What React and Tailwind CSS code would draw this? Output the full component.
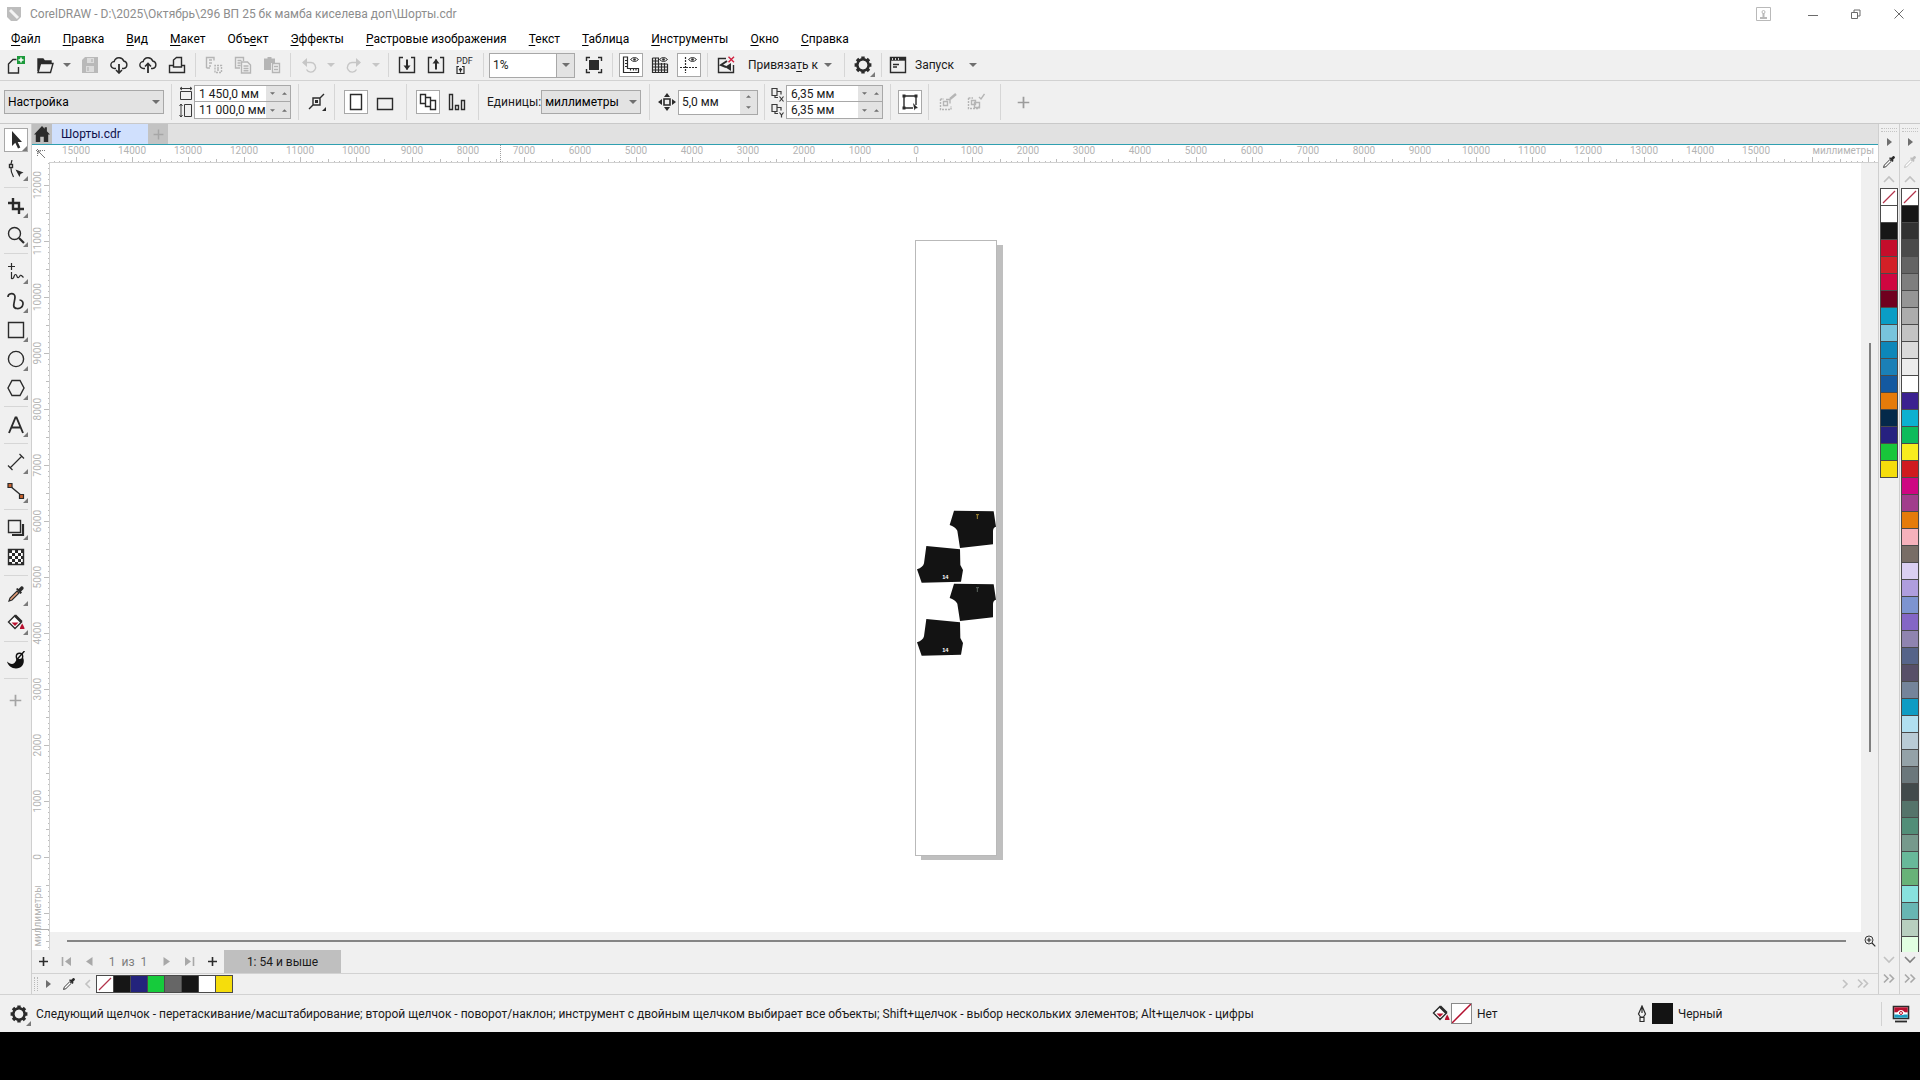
import React from "react";

/* ---------- drawing primitives ---------- */
const Icon = ({ children, className = "text-[#2b2b2b]", size = 18 }) => (
  <svg
    width={size}
    height={size}
    viewBox="0 0 18 18"
    fill="none"
    stroke="currentColor"
    strokeWidth="1.4"
    className={`shrink-0 ${className}`}
    aria-hidden="true"
  >
    {children}
  </svg>
);
const Solid = (p) => <path fill="currentColor" stroke="none" {...p} />;

const Caret = ({ up, className = "text-[#6f6f6f]", small }) => (
  <svg width={small ? 5 : 8} height={small ? 3 : 4} viewBox="0 0 8 4" className={`shrink-0 ${className}`} aria-hidden="true">
    <path d={up ? "M0 4L4 0L8 4Z" : "M0 0L4 4L8 0Z"} fill="currentColor" />
  </svg>
);

const Flyout = () => (
  <svg width="5" height="5" viewBox="0 0 5 5" className="absolute bottom-0 right-0" aria-hidden="true">
    <path d="M5 0v5H0z" fill="#7a7a7a" />
  </svg>
);

const Gear = () => (
  <Icon>
    <circle cx="9" cy="9" r="5.6" strokeWidth="2.6" />
    <path
      strokeWidth="3.4"
      d="M9 3.500V.6M9 14.500v2.900M3.500 9H.6M14.500 9h2.900M5.200 5.200L3 3M12.800 12.800L15 15M5.200 12.800L3 15M12.800 5.200L15 3"
    />
    <circle cx="9" cy="9" r="4.200" fill="#f0f0f0" stroke="none" />
  </Icon>
);
const Dropper = ({ className, tip = "#fff" }) => (
  <Icon className={className}>
    <path d="M2 16l1-3 7-7 2 2-7 7z" fill={tip} strokeWidth="1.2" />
    <Solid d="M9 4l1.500-1 1 1L14 1.500c1.500-.8 3.200.8 2.500 2.500L14 6.500l1 1L13.500 9z" />
  </Icon>
);
const Bucket = () => (
  <Icon>
    <path d="M8 1.500l6.500 6.500L8 14.500 1.500 8z" fill="#fff" />
    <path d="M8 1.500l6.500 6.500" strokeWidth="2.800" />
    <path d="M4.500 8.500h7L8 12z" fill="#b8112f" stroke="none" />
    <path d="M15.200 9.500c1.500 2.500 2.300 4 2.300 5.500h-4.600c0-1.500.8-3 2.300-5.500z" fill="#b8112f" stroke="none" />
  </Icon>
);
const Eye = () => (
  <>
    <path d="M8.500 3.500q4-4 8 0q-4 4-8 0z" strokeWidth="1" />
    <circle cx="12.500" cy="3.500" r="1.300" fill="currentColor" stroke="none" />
  </>
);

/* ---------- standard toolbar icons ---------- */
const NewDoc = () => (
  <Icon>
    <path d="M9.500 3.500H6L1.500 8v9h10v-6" />
    <rect x="10" y="0" width="8" height="8" fill="#1d9b3c" stroke="none" />
    <path d="M14 1.500v5M11.500 4h5" stroke="#fff" strokeWidth="1.500" />
  </Icon>
);
const Open = () => (
  <Icon>
    <path d="M2 15V3h5l1.500 2H15v2" fill="currentColor" />
    <path d="M4.500 7.500H17L14.500 16.500H2z" fill="#f0f0f0" />
  </Icon>
);
const Save = () => (
  <Icon className="text-[#b9b9b9]">
    <Solid d="M1 4l3-3h13v16H1z" />
    <path d="M6 2h7v5H6zM5 10h8v6H5z" fill="#dcdcdc" stroke="none" />
    <path d="M11 3v3M7 11v4" />
  </Icon>
);
const Cloud = ({ up }) => (
  <Icon>
    <path d="M6 12.500H4.500a3.500 3.500 0 0 1-.3-7A5 5 0 0 1 13.700 5a3.800 3.800 0 0 1 0 7.500H12" />
    <path d="M9 8v9" strokeWidth="1.800" />
    <path d={up ? "M6 10.500L9 7.500l3 3" : "M6 14l3 3 3-3"} strokeWidth="1.600" />
  </Icon>
);
const Print = () => (
  <Icon>
    <path d="M5.500 11V4l3-2.500h5V11zM5.500 9.500h-4v7h15v-7h-3" />
  </Icon>
);
const Cut = () => (
  <Icon className="text-[#b5b5b5]">
    <path d="M1.500 12V1.500H9v3M1.500 12H5M4 4h3M4 7h3M4 10h2" />
    <path d="M10 16.500v-7h6.500v7zM12 12h3M12 14h3" strokeDasharray="2 1" />
  </Icon>
);
const Copy = () => (
  <Icon className="text-[#b5b5b5]">
    <path d="M6 12H1.500V1.500h8V5M3.500 4.500h4M3.500 7h3M3.500 9.500h3M7.500 6h6l3 3v8h-9zM9.500 10h5M9.500 12.500h5M9.500 14.800h5" />
  </Icon>
);
const Paste = () => (
  <Icon className="text-[#b5b5b5]">
    <Solid d="M1 2.500h3.500V1h4v1.500H12V7H8v7H1z" />
    <path d="M9.500 7.500h7v9h-7zM11 10.500h4M11 13.500h4" />
  </Icon>
);
const Undo = ({ flip }) => (
  <Icon className={`text-[#c6c6c6] ${flip ? "-scale-x-100" : ""}`}>
    <path d="M3 6.500h8a4.800 4.800 0 1 1-4.500 7" />
    <Solid d="M7 2v9L2 6.500z" />
  </Icon>
);
const Port = ({ up }) => (
  <Icon>
    <path d="M5 1.500H1.500v15h15v-15H13" />
    <path d="M9 3.500v10" strokeWidth="2" />
    <Solid d={up ? "M5.500 7.500h7L9 3z" : "M5.500 9.500h7L9 14z"} />
  </Icon>
);
const Pdf = () => (
  <span className="flex flex-col text-[#2b2b2b]">
    <span className="text-[9px] leading-[9px]">PDF</span>
    <svg width="9" height="8" viewBox="0 0 9 8" fill="none" stroke="currentColor" aria-hidden="true">
      <path d="M3 .5H1v7h7v-7H6M4.500 6.500v-4M3 4l1.500-1.500L6 4" strokeWidth="1.200" />
    </svg>
  </span>
);
const Full = () => (
  <Icon>
    <Solid d="M4 4h10v10H4z" />
    <path d="M1.500 5V1.500H5M13 1.500h3.500V5M16.500 13v3.500H13M5 16.500H1.500V13" />
  </Icon>
);
const RulerIc = () => (
  <Icon>
    <path d="M1.500 1v15.500h15v-4h-11V1zM3 4.500h2.500M3 7.500h2.500M3 10.500h2.500M8.500 13v1.500M11.500 13v1.500M14 13v1.500" strokeWidth="1.200" />
    <Eye />
  </Icon>
);
const GridIc = () => (
  <Icon>
    <path d="M1.500 2v14.500h15V8M1.500 2H8M4.500 2v14.500M7.500 2v14.500M10.500 7v9.500M13.500 7v9.500M1.500 5H7.500M1.500 8h15M1.500 11h15M1.500 14h15" strokeWidth="1.200" />
    <Eye />
  </Icon>
);
const GuideIc = () => (
  <Icon>
    <path d="M5.500 1v16M0 11.500h18" strokeDasharray="2 1" strokeWidth="1.200" />
    <Eye />
  </Icon>
);
const SnapOff = () => (
  <Icon>
    <path d="M9 2.500H1.500v14h15V9" />
    <path d="M10 5l-6 4 5 2" strokeWidth="2" />
    <Solid d="M14 7v8l-6-4z" />
    <path d="M11.500.8l5.500 5.500M17 .8l-5.500 5.500" stroke="#d0213f" />
  </Icon>
);
const Launch = () => (
  <Icon>
    <path d="M1.500 1.500h15v15h-15zM4 8.500h6M4 11h4" />
    <path d="M1.500 3.200h15" strokeWidth="3" />
    <path d="M3 3h1M6 3h1M9 3h1" stroke="#fff" />
  </Icon>
);

/* ---------- toolbox icons ---------- */
const TOOLS = [
  [
    ["Указатель", <Icon><Solid d="M5 0v15l3.300-3.200L11 17.500l2.300-1.100-2.600-5.400H15z" /></Icon>, true],
    ["Форма", <Icon><path d="M5 0Q2 9 6.500 17" strokeWidth="1.200" /><rect x="2.500" y="4.500" width="3" height="3" fill="#fff" /><Solid d="M8.500 9.500l8 3-3 1.500-1 3z" /></Icon>],
  ],
  [
    ["Обрезка", <Icon><path d="M6 1v11h11M1 6h11v11" strokeWidth="2.400" /></Icon>],
    ["Масштаб", <Icon><circle cx="7.500" cy="7.500" r="6" /><path d="M12 12l5 5" strokeWidth="2.200" /></Icon>],
  ],
  [
    ["Свободная форма", <Icon><path d="M4.500 0v7M1 3.500h7M4.500 9v6.500c3 1 2-4 4-4s1 4 3 3 1-3 3-2l2 2" strokeWidth="1.200" /></Icon>],
    ["Художественное оформление", <Icon><path d="M1 5c0-4 7-5 7 0S4 16 10 16.500C17 17 18 8 12.500 8" strokeWidth="1.700" /></Icon>],
    ["Прямоугольник", <Icon><path d="M1.500 1.500h15v15h-15z" /></Icon>],
    ["Эллипс", <Icon><circle cx="9" cy="9" r="7.600" /></Icon>],
    ["Многоугольник", <Icon><path d="M5 1.500h8L17 9l-4 7.500H5L1 9z" /></Icon>],
  ],
  [["Текст", <Icon><path d="M2 17L8.500 1.500h1L16 17M4.500 11.500h9" strokeWidth="1.900" /></Icon>]],
  [
    ["Размер", <Icon><path d="M3 15L15 3M1 12.500l4.500 4.500M12.500 1L17 5.500" strokeWidth="1.200" /></Icon>],
    ["Соединитель", <Icon><path d="M3 4l12 10" /><path d="M1 1.500h4v4H1zM12.500 12.500h4v4h-4z" fill="#c8612c" strokeWidth="1.200" /></Icon>],
  ],
  [
    ["Тень", <Icon><path d="M1.500 1.500h12v12h-12z" /><path d="M5 16h11V5" strokeWidth="2.200" /></Icon>],
    [
      "Прозрачность",
      <Icon>
        <path d="M1.500 1.500h15v15h-15z" fill="#fff" />
        <Solid d="M2 2h3v3H2zM8 2h3v3H8zM14 2h3v3h-3zM5 5h3v3H5zM11 5h3v3h-3zM2 8h3v3H2zM8 8h3v3H8zM14 8h3v3h-3zM5 11h3v3H5zM11 11h3v3h-3zM2 14h3v3H2zM8 14h3v3H8zM14 14h3v3h-3z" />
      </Icon>,
      false,
      true,
    ],
  ],
  [
    ["Пипетка", <Dropper tip="#e9a27c" />],
    ["Интерактивная заливка", <Bucket />],
  ],
  [
    [
      "Художник",
      <Icon className="text-[#111111]">
        <Solid d="M0 10.500c3 3 7 3.500 8.500 0C10 7 14 6.500 16.500 7.500c1.500 6-2.500 10-7.500 10-4.500 0-8-3-9-7z" />
        <circle cx="12.500" cy="5.500" r="3.200" fill="#f0f0f0" />
        <path d="M17.500 0l-8 9" />
      </Icon>,
      false,
      true,
    ],
  ],
];

const DOC_COLORS = [
  "#ffffff", "#161616", "#c40d2b", "#d32027", "#cf0640", "#70001f", "#0a9dc5", "#78c4dc",
  "#0d87b9", "#1b80b7", "#1459a0", "#e57b0a", "#04294a", "#262180", "#18c63a", "#f5dd0c",
];
const MAIN_COLORS = [
  "#161616", "#323232", "#4a4a4a", "#646464", "#7e7e7e", "#959595", "#acacac", "#c3c3c3", "#dadada", "#ececec",
  "#ffffff", "#3b2190", "#0cb0d0", "#0dbb5b", "#f8ec1e", "#cf1a1f", "#ce0682", "#a13d8c", "#e57b0a", "#f5b1bb",
  "#786d66", "#dacff2", "#af9ede", "#7d94d0", "#8466c6", "#8f84b0", "#566489", "#574f68", "#74849a", "#0d9cc4",
  "#b0dff0", "#b9cbd5", "#94a2a8", "#6b777b", "#424a4b", "#55736a", "#528e78", "#76998c", "#68b99a", "#68b278",
  "#88e2de", "#68b6b3", "#b8cfbf", "#e2ffe2",
];
const BOTTOM_COLORS = ["#161616", "#23237c", "#16cb3c", "#666666", "#161616", "#ffffff", "#f5dd0c"];

/* ---------- small building blocks ---------- */
const Cell = ({ label, on, fly, children }) => (
  <div className="flex w-[29px] shrink-0 justify-center">
    <button
      aria-label={label}
      className={`relative flex size-6 items-center justify-center ${on ? "border border-[#a8a8a8] bg-white" : ""}`}
    >
      {children}
      {fly && <Flyout />}
    </button>
  </div>
);
const Drop = ({ label, faint }) => (
  <button aria-label={label} className="flex h-6 w-4 shrink-0 items-center justify-center">
    <Caret className={faint ? "text-[#c6c6c6]" : "text-[#6f6f6f]"} />
  </button>
);
const Sep = () => (
  <div className="flex w-2 shrink-0 justify-center">
    <div className="h-6 w-px bg-[#d6d6d6]" />
  </div>
);
const TallSep = () => <div className="h-9 w-px shrink-0 bg-[#d6d6d6]" />;

const PairField = ({ id, label, value }) => (
  <div className="flex h-4 bg-white">
    <label htmlFor={id} className="sr-only">{label}</label>
    <input id={id} defaultValue={value} className="min-w-0 flex-1 bg-white pl-1 text-xs leading-4 outline-none" />
    <div className="flex w-6 shrink-0 items-center justify-around bg-[#e3e3e3]">
      <button aria-label={`${label}: меньше`}><Caret small /></button>
      <button aria-label={`${label}: больше`}><Caret small up /></button>
    </div>
  </div>
);

const NoColor = () => (
  <svg viewBox="0 0 16 16" className="size-full bg-white" aria-hidden="true">
    <path d="M2 14L14 2" stroke="#b3344c" strokeWidth="1.200" />
  </svg>
);

const Chevron = ({ d, className = "text-[#c2c2c2]" }) => (
  <svg width="14" height="12" viewBox="0 0 14 12" fill="none" stroke="currentColor" strokeWidth="1.600" className={className} aria-hidden="true">
    <path d={d} />
  </svg>
);
const DBL = "M2 1.500l4 4-4 4M7.500 1.500l4 4-4 4";

const Palette = ({ name, colors, faint, full }) => (
  <section aria-label={name} className="flex w-[21px] shrink-0 flex-col items-center overflow-hidden border-l border-[#cfcfcf]">
    <div className="mt-1 h-1 w-4 shrink-0 border-y border-dotted border-[#c4c4c4]" />
    <button aria-label="Меню палитры" className="flex h-5 shrink-0 items-center">
      <svg width="5" height="8" viewBox="0 0 5 8"><path d="M0 0L5 4L0 8Z" fill="#6f6f6f" /></svg>
    </button>
    <button aria-label="Пипетка" className="flex h-5 shrink-0 items-center">
      <Dropper className={`size-[14px] ${faint ? "text-[#bdbdbd]" : "text-[#2b2b2b]"}`} />
    </button>
    <button aria-label="Вверх" className="flex h-4 shrink-0 items-center">
      <Chevron d="M2 8l5-5 5 5" />
    </button>
    <div className="flex min-h-0 w-[18px] flex-1 flex-col overflow-hidden">
      <button aria-label="Нет цвета" className="h-[18px] w-full shrink-0 border border-[#4a4a4a] bg-white"><NoColor /></button>
      {colors.map((c, i) => (
        <button key={i} aria-label={c} className="h-[17px] w-full shrink-0 border border-t-0 border-[#4a4a4a]" style={{ backgroundColor: c }} />
      ))}
    </div>
    <button aria-label="Вниз" className="flex h-4 shrink-0 items-center">
      <Chevron d="M2 3l5 5 5-5" className={full ? "text-[#808080]" : "text-[#c2c2c2]"} />
    </button>
    <button aria-label="Развернуть" className="flex h-[26px] shrink-0 items-start pt-[5px]">
      <Chevron d={DBL} className="text-[#a8a8a8]" />
    </button>
  </section>
);

/* ---------- rulers ---------- */
const H_MARKS = Array.from({ length: 33 }, (_, i) => i - 15);
const V_MARKS = Array.from({ length: 15 }, (_, i) => 12 - i);

const HRuler = () => (
  <div className="relative min-w-0 flex-1 overflow-hidden border-b border-[#d0d0d0] bg-white">
    <div className="-ml-px flex h-[17px]">
      {H_MARKS.map((m) => (
        <div key={m} className="flex h-full w-14 shrink-0 flex-col items-center justify-between">
          <span className="text-[10px] leading-3 text-[#b4b4b4]">{m < 16 ? Math.abs(m) * 1000 : ""}</span>
          <svg width="56" height="5" viewBox="0 0 56 5" className="shrink-0" aria-hidden="true">
            <path d="M28.500 0v5M.5 2v3" stroke="#bdbdbd" />
            <path d="M6 4.500h1M11 4.500h1M17 4.500h1M22 4.500h1M34 4.500h1M39 4.500h1M45 4.500h1M50 4.500h1" stroke="#bdbdbd" />
          </svg>
        </div>
      ))}
    </div>
    <span className="absolute right-1 top-0 bg-white text-[10px] leading-3 text-[#b4b4b4]">миллиметры</span>
    <div className="absolute left-[451px] top-0 h-full border-l border-dotted border-[#a0a0a0]" />
  </div>
);

const VRuler = () => (
  <div className="relative w-[18px] shrink-0 overflow-hidden border-r border-[#d0d0d0] bg-white">
    <div className="-mt-1.5 flex flex-col">
      {V_MARKS.map((m) => (
        <div key={m} className="flex h-14 w-full shrink-0 items-center justify-between">
          <span className="rotate-180 text-[10px] leading-3 text-[#b4b4b4] [writing-mode:vertical-rl]">{m >= 0 ? m * 1000 : ""}</span>
          <svg width="5" height="56" viewBox="0 0 5 56" className="shrink-0" aria-hidden="true">
            <path d="M0 28.500h5M2 .5h3" stroke="#bdbdbd" />
            <path d="M4.500 6v1M4.500 11v1M4.500 17v1M4.500 22v1M4.500 34v1M4.500 39v1M4.500 45v1M4.500 50v1" stroke="#bdbdbd" />
          </svg>
        </div>
      ))}
    </div>
    <span className="absolute bottom-1 left-0 rotate-180 text-[10px] leading-3 text-[#b4b4b4] [writing-mode:vertical-rl]">миллиметры</span>
    <div className="absolute bottom-5 left-0 w-full border-t border-[#b0b0b0]" />
  </div>
);

/* ---------- artwork on the page ---------- */
const Pieces = ({ dy, mark }) => (
  <g transform={`translate(0 ${dy})`}>
    <path d="M162 62L281 64L288 110Q280 112 279 122V163L180 174L172 122Q165 110 149 105Z" fill="#131313" />
    <path d="M79 168L180 178L181 225L189 240L183 275L65 278L51 238Q69 232 72 220Z" fill="#131313" />
    <path d="M228 74h9M232 74v13" stroke={mark} strokeWidth="3" />
    <text x="136" y="267" fontSize="17" fontWeight="700" textAnchor="middle" fill="#fff" fontFamily="Liberation Sans, sans-serif">14</text>
  </g>
);

const MENU = [
  ["", "Ф", "айл"], ["", "П", "равка"], ["", "В", "ид"], ["", "М", "акет"], ["Объ", "е", "кт"], ["", "Э", "ффекты"],
  ["", "Р", "астровые изображения"], ["", "Т", "екст"], ["", "Т", "аблица"], ["", "И", "нструменты"], ["", "О", "кно"], ["", "С", "правка"],
];

export default function App() {
  return (
    <div className="flex h-screen flex-col overflow-hidden bg-[#f0f0f0] font-['Roboto','Open_Sans',sans-serif] text-xs text-[#1a1a1a]">
      {/* title bar */}
      <header className="flex h-7 shrink-0 items-center bg-white pl-1.5">
        <svg width="16" height="16" viewBox="0 0 16 16" aria-hidden="true">
          <path d="M1 1h14v10l-4 4H5l-4-4z" fill="#bdbdbd" />
          <path d="M4 4l8 8" stroke="#f4f4f4" strokeWidth="3" />
        </svg>
        <h1 className="ml-2 flex-1 text-[#8d8d8d]">CorelDRAW - D:\2025\Октябрь\296 ВП 25 бк мамба киселева доп\Шорты.cdr</h1>
        <button aria-label="Учетная запись" className="mr-4 flex w-6 justify-center">
          <svg width="15" height="14" viewBox="0 0 15 14" fill="none" stroke="#b9b9b9" aria-hidden="true">
            <path d="M.5.500h14v13H.5z" /><path d="M4 11h7M7.500 10V6" strokeWidth="2" /><circle cx="7.500" cy="5" r="1.500" />
          </svg>
        </button>
        {[
          ["Свернуть", "M0 6.500h10"],
          ["Восстановить", "M.5 3.500h6v6h-6zM3 3.500V1h6v6H6.500"],
          ["Закрыть", "M.5.500l9 9M9.500.500l-9 9"],
        ].map(([l, d]) => (
          <button key={l} aria-label={l} className="flex h-full w-[43px] items-center justify-center">
            <svg width="10" height="10" viewBox="0 0 10 10" fill="none" stroke="#6b6b6b" aria-hidden="true"><path d={d} /></svg>
          </button>
        ))}
      </header>

      {/* menu */}
      <nav className="flex h-[22px] shrink-0 items-center bg-white">
        {MENU.map(([a, u, b]) => (
          <button key={u + b} className="whitespace-nowrap px-[11px] text-black">
            {a}<span className="underline underline-offset-2">{u}</span>{b}
          </button>
        ))}
      </nav>

      {/* standard toolbar */}
      <div className="flex h-[31px] shrink-0 items-center border-b border-[#d2d2d2] pl-px">
        <Cell label="Создать"><NewDoc /></Cell>
        <Cell label="Открыть"><Open /></Cell>
        <Drop label="Недавние файлы" />
        <Cell label="Сохранить"><Save /></Cell>
        <Cell label="Загрузить из облака"><Cloud /></Cell>
        <Cell label="Отправить в облако"><Cloud up /></Cell>
        <Cell label="Печать"><Print /></Cell>
        <Sep />
        <Cell label="Вырезать"><Cut /></Cell>
        <Cell label="Копировать"><Copy /></Cell>
        <Cell label="Вставить"><Paste /></Cell>
        <Sep />
        <Cell label="Отменить"><Undo /></Cell>
        <Drop label="Список отмены" faint />
        <Cell label="Повторить"><Undo flip /></Cell>
        <Drop label="Список повтора" faint />
        <Sep />
        <Cell label="Импорт"><Port /></Cell>
        <Cell label="Экспорт"><Port up /></Cell>
        <Cell label="Публикация в PDF"><Pdf /></Cell>
        <Sep />
        <div className="ml-0.5 mr-1 flex h-[25px] w-[86px] shrink-0 border border-[#a8a8a8] bg-white">
          <input aria-label="Масштаб" defaultValue="1%" className="min-w-0 flex-1 px-[3px] text-xs outline-none" />
          <button aria-label="Выбрать масштаб" className="flex w-[18px] items-center justify-center border-l border-[#a8a8a8] bg-[#e3e3e3]"><Caret /></button>
        </div>
        <Cell label="Полноэкранный просмотр"><Full /></Cell>
        <Sep />
        <Cell label="Линейки" on><RulerIc /></Cell>
        <Cell label="Сетка"><GridIc /></Cell>
        <Cell label="Направляющие" on><GuideIc /></Cell>
        <Sep />
        <Cell label="Отключить привязку"><SnapOff /></Cell>
        <button className="mr-1 flex h-6 w-24 shrink-0 items-center justify-between pl-2 pr-1">
          <span className="whitespace-nowrap">Привяза<span className="underline underline-offset-2">т</span>ь к</span>
          <Caret />
        </button>
        <Sep />
        <Cell label="Параметры" fly><Gear /></Cell>
        <Sep />
        <button className="flex h-6 w-24 shrink-0 items-center gap-2 pl-1 pr-1">
          <Launch />
          <span className="flex-1 text-left">Запуск</span>
          <Caret />
        </button>
      </div>

      {/* property bar */}
      <div className="flex h-[43px] shrink-0 items-center border-b border-[#c9c9c9] pl-1">
        <div className="relative mr-[7px] w-40 shrink-0">
          <select aria-label="Размер страницы" className="h-6 w-full appearance-none border border-[#a8a8a8] bg-[#e3e3e3] px-[3px] text-xs text-black">
            <option>Настройка</option>
          </select>
          <span className="pointer-events-none absolute right-1 top-2.5"><Caret /></span>
        </div>
        <TallSep />
        <div className="ml-[7px] mr-px flex shrink-0 flex-col gap-0.5 text-[#3a3a3a]">
          <svg width="14" height="15" viewBox="0 0 14 15" fill="none" stroke="currentColor"><path d="M1.500 5.500h11v8h-11zM1 2.500h12M3 1L1 2.500 3 4M11 1l2 1.500L11 4" /></svg>
          <svg width="14" height="15" viewBox="0 0 14 15" fill="none" stroke="currentColor"><path d="M5.500 1.500h7v12h-7zM2 1v13M.5 3L2 1l1.500 2M.5 12L2 14l1.500-2" /></svg>
        </div>
        <div className="mr-[7px] w-[97px] shrink-0 divide-y divide-[#a8a8a8] border border-[#a8a8a8]">
          <PairField id="pw" label="Ширина" value="1 450,0 мм" />
          <PairField id="ph" label="Высота" value="11 000,0 мм" />
        </div>
        <TallSep />
        <div className="flex w-[35px] shrink-0 justify-center">
          <button aria-label="Точность перетаскивания">
            <Icon>
              <path d="M5 5h7v7H5zM1 16l4-4M12 5l4-4" /><Solid d="M7 7h3v3H7zM18 18v-4l-4 4z" />
            </Icon>
          </button>
        </div>
        <TallSep />
        <div className="flex w-[71px] shrink-0 gap-2 pl-[9px]">
          <button aria-label="Книжная" className="flex size-6 items-center justify-center border border-[#a8a8a8] bg-white"><Icon><path d="M3.500 1.500h11v15h-11z" /></Icon></button>
          <button aria-label="Альбомная" className="flex h-6 items-center pt-1"><Icon><path d="M1.500 3.500h15v11h-15z" /></Icon></button>
        </div>
        <TallSep />
        <div className="flex w-[71px] shrink-0 gap-2 pl-[9px]">
          <button aria-label="Все страницы" className="flex size-6 items-center justify-center border border-[#a8a8a8] bg-white">
            <Icon><path d="M1.500 1.500h5v9h-5zM6.500 4.500h5v9h-5zM11.500 7.500h5v9h-5z" fill="#fff" /></Icon>
          </button>
          <button aria-label="Текущая страница" className="flex h-6 items-center">
            <Icon><path d="M1.500 1.500h3v15h-3zM7.500 12.500h3v4h-3zM13.500 7.500h3v9h-3z" /></Icon>
          </button>
        </div>
        <TallSep />
        <div className="flex w-[170px] shrink-0 items-center justify-between px-2">
          <label htmlFor="units">Единицы:</label>
          <div className="relative w-[102px]">
            <select id="units" className="h-6 w-full appearance-none border border-[#a8a8a8] bg-[#e3e3e3] px-[3px] text-xs text-black"><option>миллиметры</option></select>
            <span className="pointer-events-none absolute right-1 top-2.5"><Caret /></span>
          </div>
        </div>
        <TallSep />
        <div className="flex w-[114px] shrink-0 items-center gap-0.5 pl-2">
          <Icon><path d="M6 6h6v6H6z" strokeWidth="1.600" /><Solid d="M9 0l3 4H6zM9 18l3-4H6zM0 9l4-3v6zM18 9l-4-3v6z" /></Icon>
          <div className="flex h-[25px] w-20 border border-[#a8a8a8] bg-white">
            <input aria-label="Шаг смещения" defaultValue="5,0 мм" className="min-w-0 flex-1 px-[3px] text-xs outline-none" />
            <div className="flex w-[17px] flex-col items-center justify-around bg-[#e3e3e3]">
              <button aria-label="Больше"><Caret small up className="block text-[#6f6f6f]" /></button>
              <button aria-label="Меньше"><Caret small className="block text-[#6f6f6f]" /></button>
            </div>
          </div>
        </div>
        <TallSep />
        <div className="ml-1.5 mr-px flex shrink-0 flex-col text-[#3a3a3a]">
          {["M8.500 10.500l4 5M12.500 10.500l-4 5", "M8.500 10.500l2 2.500 2-2.500M10.500 13v2.500"].map((d) => (
            <svg key={d} width="14" height="16" viewBox="0 0 14 16" fill="none" stroke="currentColor" strokeWidth="1.200" aria-hidden="true">
              <path d="M1 2.500h5v7H1zM6 5.500h4v3M4 9.500v2h3" />
              <path d={d} />
            </svg>
          ))}
        </div>
        <div className="mr-[7px] w-[97px] shrink-0 divide-y divide-[#a8a8a8] border border-[#a8a8a8]">
          <PairField id="dx" label="Дублирование X" value="6,35 мм" />
          <PairField id="dy" label="Дублирование Y" value="6,35 мм" />
        </div>
        <TallSep />
        <div className="flex w-[37px] shrink-0 justify-center">
          <button aria-label="Обрабатывать как с заливкой" className="flex size-6 items-center justify-center border border-[#a8a8a8] bg-white">
            <Icon><path d="M3 3h12v9M3 3v12h9" /><Solid d="M1.500 1.500h3v3h-3zM13.500 1.500h3v3h-3zM1.500 13.500h3v3h-3zM12 10l5 5-2.500.5-1 2z" /></Icon>
          </button>
        </div>
        <TallSep />
        <div className="flex w-[71px] shrink-0 items-center gap-2.5 pl-2.5 text-[#b5b5b5]">
          <Icon className=""><path d="M1.500 6v10.500H12V13M1.500 6H5" strokeDasharray="2 1" /><path d="M4.500 8.500h4v4h-4zM7 6.500h4v4" /><path d="M11 6l6-5" strokeWidth="2.400" /></Icon>
          <Icon className=""><path d="M1.500 5v10.500H12V13M1.500 5H6" strokeDasharray="2 1" /><path d="M4.500 7.500h4v4h-4zM7.500 9.500h5v5h-5zM12 4l2 2 3.500-5" /></Icon>
        </div>
        <TallSep />
        <button aria-label="Настроить" className="flex w-11 shrink-0 justify-center"><Icon size={13} className="text-[#9c9c9c]"><path d="M9 1v16M1 9h16" strokeWidth="2.400" /></Icon></button>
      </div>

      {/* working area */}
      <main className="flex min-h-0 flex-1">
        <aside className="flex w-8 shrink-0 flex-col items-center border-r border-[#cfcfcf] pr-1 pt-px">
          {TOOLS.map((group, g) => (
            <React.Fragment key={g}>
              {group.map(([label, icon, on, noFly]) => (
                <div key={label} className="flex h-[29px] shrink-0 items-center pl-1">
                  <button aria-label={label} className={`relative flex size-6 items-center justify-center ${on ? "border border-[#a8a8a8] bg-white" : ""}`}>
                    {icon}
                    {!noFly && <Flyout />}
                  </button>
                </div>
              ))}
              <div className="my-[3px] ml-1 h-0.5 w-6 shrink-0 border-b border-[#d6d6d6]" />
            </React.Fragment>
          ))}
          <button aria-label="Добавить инструменты" className="ml-1 mt-3"><Icon size={13} className="text-[#a4a4a4]"><path d="M9 1v16M1 9h16" strokeWidth="2.400" /></Icon></button>
        </aside>

        <div className="flex min-w-0 flex-1 flex-col">
          {/* document tabs */}
          <div className="flex h-[21px] shrink-0 border-b border-[#2f9fb0] bg-[#e1e1e1]">
            <button aria-label="Начало" className="flex w-5 items-center justify-center bg-[#bfbfbf]">
              <Icon size={16}><Solid d="M9 0L0 9.500h2V18h5v-6h4v6h5V9.500h2L14.500 6V1.500h-2.500V3z" /></Icon>
            </button>
            <button className="w-24 bg-[#d0e0fd] pl-[9px] text-left text-[#10104a]">Шорты.cdr</button>
            <button aria-label="Новая вкладка" className="flex w-5 items-center justify-center bg-[#c3c3c3]">
              <Icon size={11} className="text-[#a6a6a6]"><path d="M9 1v16M1 9h16" strokeWidth="2.400" /></Icon>
            </button>
          </div>

          <div className="flex shrink-0">
            <div className="flex h-[18px] w-[17px] shrink-0 items-center justify-center bg-white">
              <svg width="10" height="10" viewBox="0 0 10 10" fill="none" stroke="#7a7a7a" aria-hidden="true"><path d="M1.500 0v8M0 1.500h9" strokeDasharray="1 1" /><path d="M2 2l7 7M2 5V2h3" /></svg>
            </div>
            <HRuler />
          </div>

          <div className="flex min-h-0 flex-1">
            <VRuler />
            <div className="flex min-w-0 flex-1 flex-col">
              <div className="flex min-h-0 flex-1">
                <div className="relative min-w-0 flex-1 overflow-hidden bg-white">
                  <div className="absolute left-[871px] top-[82px] h-[615px] w-[82px] bg-[#bfbfbf]" />
                  <div className="absolute left-[865px] top-[77px] h-[616px] w-[82px] border border-[#b9b9b9] bg-white" />
                  <svg width="120" height="180" viewBox="0 0 360 540" className="absolute left-[850px] top-[327px]" aria-label="Раскладка">
                    <Pieces dy={0} mark="#a58a35" />
                    <Pieces dy={219} mark="#5d655f" />
                  </svg>
                </div>
                <div className="flex w-[17px] shrink-0 flex-col pt-[180px]">
                  <div className="ml-2 h-[409px] w-0.5 bg-[#7f7f7f]" />
                </div>
              </div>
              <div className="flex h-[18px] shrink-0 items-center pl-[17px]">
                <div className="mr-[18px] h-0.5 flex-1 bg-[#858585]" />
                <button aria-label="Навигатор" className="mr-0.5">
                  <Icon size={12}><circle cx="7.500" cy="7.500" r="6" /><path d="M12 12l5 5M7.500 4v7M4 7.500h7" strokeWidth="1.800" /></Icon>
                </button>
              </div>
            </div>
          </div>

          {/* page navigator */}
          <div className="flex h-6 shrink-0 items-stretch border-b border-[#d2d2d2]">
            {[
              ["Добавить страницу в начало", "M6.500 2v9M2 6.500h9", "#2b2b2b"],
              ["Первая", "M2.500 2v9", "#a8a8a8", "M11 2v9L5 6.500z"],
              ["Предыдущая", "", "#a8a8a8", "M9.500 2v9L3 6.500z"],
            ].map(([l, d, c, f]) => (
              <button key={l} aria-label={l} className="flex w-[23px] items-center justify-center">
                <svg width="13" height="13" viewBox="0 0 13 13" stroke={c} strokeWidth="1.600"><path d={d} />{f && <path d={f} fill={c} stroke="none" />}</svg>
              </button>
            ))}
            <span className="flex w-[54px] items-center justify-center whitespace-pre text-[#7d7d7d]">1  из  1</span>
            {[
              ["Следующая", "", "#a8a8a8", "M3.500 2v9L10 6.500z"],
              ["Последняя", "M10.500 2v9", "#a8a8a8", "M2 2v9l6-4.500z"],
              ["Добавить страницу в конец", "M6.500 2v9M2 6.500h9", "#2b2b2b"],
            ].map(([l, d, c, f]) => (
              <button key={l} aria-label={l} className="flex w-[23px] items-center justify-center">
                <svg width="13" height="13" viewBox="0 0 13 13" stroke={c} strokeWidth="1.600"><path d={d} />{f && <path d={f} fill={c} stroke="none" />}</svg>
              </button>
            ))}
            <button className="w-[117px] bg-[#bfbfbf]">1: 54 и выше</button>
          </div>

          {/* document palette */}
          <div className="flex h-5 shrink-0 items-center pl-0.5">
            <div className="h-3.5 w-1 border-x border-dotted border-[#b9b9b9]" />
            <button aria-label="Меню палитры" className="flex w-5 justify-center"><svg width="5" height="8" viewBox="0 0 5 8"><path d="M0 0L5 4L0 8Z" fill="#6f6f6f" /></svg></button>
            <button aria-label="Пипетка" className="flex w-[22px] justify-center"><Dropper className="size-[14px] text-[#2b2b2b]" /></button>
            <button aria-label="Назад" className="flex w-4 justify-center"><Chevron d="M9 2L5 6l4 4" /></button>
            <div className="flex h-[18px]">
              <button aria-label="Нет цвета" className="w-[18px] border border-[#4a4a4a]"><NoColor /></button>
              {BOTTOM_COLORS.map((c, i) => (
                <button key={i} aria-label={c} className="w-[17px] border border-l-0 border-[#4a4a4a]" style={{ backgroundColor: c }} />
              ))}
            </div>
            <div className="ml-auto mr-2 flex gap-1">
              <button aria-label="Вперед"><Chevron d="M5 2l4 4-4 4" /></button>
              <button aria-label="Развернуть"><Chevron d={DBL} /></button>
            </div>
          </div>
        </div>

        <Palette name="Палитра документа" colors={DOC_COLORS} />
        <Palette name="Палитра по умолчанию" colors={MAIN_COLORS} faint full />
      </main>

      {/* status bar */}
      <footer className="flex h-[38px] shrink-0 items-center border-t border-[#d2d2d2] pl-[7px]">
        <button aria-label="Настройка строки состояния" className="relative flex size-6 items-center justify-center"><Gear /><Flyout /></button>
        <p className="ml-[5px] flex-1 whitespace-nowrap">
          Следующий щелчок - перетаскивание/масштабирование; второй щелчок - поворот/наклон; инструмент с двойным щелчком выбирает все объекты; Shift+щелчок - выбор нескольких элементов; Alt+щелчок - цифры
        </p>
        <div className="flex w-[202px] shrink-0 items-center">
          <Bucket />
          <span className="ml-px mr-[5px] size-[21px] border border-[#8a8a8a]">
            <svg viewBox="0 0 19 19" className="size-full bg-white" aria-hidden="true"><path d="M0 19L19 0" stroke="#b3112f" strokeWidth="1.500" /></svg>
          </span>
          Нет
        </div>
        <div className="flex w-[247px] shrink-0 items-center">
          <Icon><path d="M8 1L4.500 9l2 3h3l2-3zM8 1v7M6 12.500h4v4H6z" strokeWidth="1.200" /></Icon>
          <span className="mr-[5px] size-[21px] bg-[#131313]" />
          Черный
        </div>
        <div className="flex h-6 w-[39px] shrink-0 items-center border-l border-[#d2d2d2] pl-2.5">
          <button aria-label="Цветопроба">
            <Icon>
              <path d="M1.500 1.500h15v12h-15z" fill="#fff" strokeWidth="1.600" />
              <path d="M2.300 2.300h13.400v5H2.300z" fill="#b8112f" stroke="none" />
              <path d="M2.300 9.500h13.400v3.200H2.300z" fill="#1b9cc0" stroke="none" />
              <path d="M5 8c2-4 6-4 8 0-2 3-6 3-8 0z" fill="#fff" stroke="none" />
              <circle cx="9" cy="8" r="1.500" stroke="#b8112f" strokeWidth="1" />
              <path d="M3 16.500h12" strokeWidth="1.800" />
            </Icon>
          </button>
        </div>
      </footer>
      <div className="h-12 shrink-0 bg-black" />
    </div>
  );
}
